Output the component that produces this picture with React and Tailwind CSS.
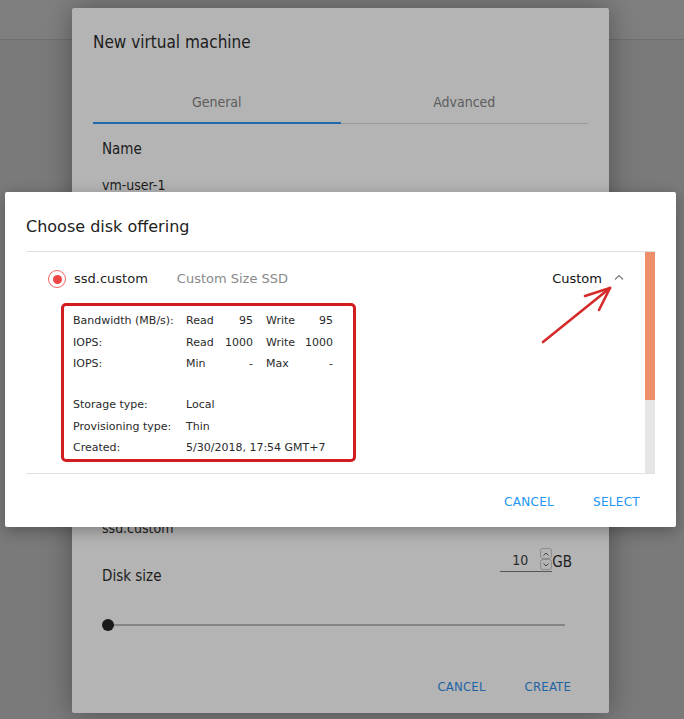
import React from 'react';

const dense = { fontFamily: '"DejaVu Sans Condensed", "DejaVu Sans", sans-serif' };
const sans = { fontFamily: '"DejaVu Sans", "Liberation Sans", sans-serif' };

const stats = [
  { label: 'Bandwidth (MB/s):', a: 'Read', av: '95', b: 'Write', bv: '95' },
  { label: 'IOPS:', a: 'Read', av: '1000', b: 'Write', bv: '1000' },
  { label: 'IOPS:', a: 'Min', av: '-', b: 'Max', bv: '-' },
];

const info = [
  { label: 'Storage type:', value: 'Local' },
  { label: 'Provisioning type:', value: 'Thin' },
  { label: 'Created:', value: '5/30/2018, 17:54 GMT+7' },
];

function BackDialog() {
  return (
    <div
      className="absolute left-[72px] top-[8px] w-[537px] h-[705px] bg-[#b4b4b4] rounded-[2px] shadow-[0_0_28px_rgba(0,0,0,0.35)] text-[#1c1c1c]"
      style={dense}
    >
      <div className="pl-[21px] pt-[23px] text-[17px] leading-[22px]">New virtual machine</div>

      {/* tabs */}
      <div className="mx-[21px] mt-[40px] flex text-[14px] text-[#5c5c5c]">
        <div className="flex-1 flex flex-col items-center">
          <span className="leading-[18px]">General</span>
          <div className="mt-[11px] h-[2px] w-full bg-[#2069ad]" />
        </div>
        <div className="flex-1 flex flex-col items-center">
          <span className="leading-[18px]">Advanced</span>
          <div className="mt-[12px] h-px w-full bg-[#999]" />
        </div>
      </div>

      <div className="px-[30px]">
        <div className="mt-[15px] text-[15px] leading-[20px]">Name</div>
        <div className="mt-[16px] text-[14px] leading-[20px]">vm-user-1</div>

        <div className="mt-[323px] text-[14px] leading-[20px]">ssd.custom</div>

        <div className="mt-[10px] flex items-start justify-between">
          <div className="mt-[18px] text-[15px] leading-[20px]">Disk size</div>
          <div className="flex items-start mr-[7px]">
            <div className="flex items-start border-b border-[#555] pb-[1px]">
              <div className="w-[40px] text-center text-[14px] leading-[18px] pt-[3px] pb-[1px] text-[#2a2a2a]">10</div>
              <div className="flex flex-col items-center">
                <div className="w-[12px] h-[11px] rounded-[3px] border border-[#8c8c8c] flex items-center justify-center">
                  <svg width="6" height="4" viewBox="0 0 6 4"><path d="M0.5 3.5 L3 1 L5.5 3.5" fill="none" stroke="#444" strokeWidth="1" /></svg>
                </div>
                <div className="w-[12px] h-[11px] rounded-[3px] border border-[#8c8c8c] flex items-center justify-center">
                  <svg width="6" height="4" viewBox="0 0 6 4"><path d="M0.5 0.5 L3 3 L5.5 0.5" fill="none" stroke="#444" strokeWidth="1" /></svg>
                </div>
              </div>
            </div>
            <div className="text-[15px] leading-[20px] mt-[4px]">GB</div>
          </div>
        </div>

        {/* slider */}
        <div className="mt-[33px] flex items-center h-[12px]">
          <div className="w-[12px] h-[12px] rounded-full bg-[#1a1a1a] -mr-[2px] z-10" />
          <div className="flex-1 h-[2px] bg-[#858585] mr-[14px]" />
        </div>

        <div className="mt-[46px] flex justify-end gap-[39px] pr-[8px] text-[13px] text-[#1e63a3] tracking-[0.2px]">
          <span>CANCEL</span>
          <span>CREATE</span>
        </div>
      </div>
    </div>
  );
}

function Arrow() {
  return (
    <svg className="absolute left-[535px] top-[280px]" width="85" height="70" viewBox="535 280 85 70">
      <g stroke="#d52b2b" strokeWidth="2.6" strokeLinecap="round" fill="none">
        <path d="M543 342 L610 288" />
        <path d="M610 288 L585 296" />
        <path d="M610 288 L599 310" />
      </g>
    </svg>
  );
}

function FrontDialog() {
  return (
    <div
      className="absolute left-[5px] top-[192px] w-[671px] h-[335px] bg-white rounded-[2px] shadow-[0_4px_16px_rgba(0,0,0,0.3)] text-[#222]"
      style={sans}
    >
      <div className="pl-[21px] pt-[25px] text-[16px] leading-[20px]">Choose disk offering</div>

      <div className="ml-[21px] mr-[21px] mt-[14px] flex h-[223px] border-y border-[#e0e0e0]">
        <div className="flex-1 relative">
          <div className="flex items-center h-[54px] pl-[22px] pr-[21px]">
            <div className="w-[18px] h-[18px] rounded-full border-[1.5px] border-[#f26464] flex items-center justify-center">
              <div className="w-[9px] h-[9px] rounded-full bg-[#f04545]" />
            </div>
            <span className="ml-[8px] text-[13px]">ssd.custom</span>
            <span className="ml-[29px] text-[13px] text-[#8a8a8a]">Custom Size SSD</span>
            <span className="ml-auto text-[13px] text-[#111]">Custom</span>
            <svg className="ml-[12px] mb-[4px]" width="10" height="6" viewBox="0 0 10 6">
              <path d="M1 5.5 L5 1.5 L9 5.5" fill="none" stroke="#777" strokeWidth="1.1" />
            </svg>
          </div>

          <div className="-mt-[3px] ml-[35px] w-[295px] h-[159px] border-[3px] border-[#d11d1d] rounded-[5px] pl-[9px] pt-[5px] text-[11px] text-[#2a2a2a]">
            {stats.map((r, i) => (
              <div key={i} className="flex h-[21.3px] items-center">
                <span className="w-[113px]">{r.label}</span>
                <span className="w-[36px]">{r.a}</span>
                <span className="w-[31px] text-right">{r.av}</span>
                <span className="ml-[13px] w-[38px]">{r.b}</span>
                <span className="w-[29px] text-right">{r.bv}</span>
              </div>
            ))}
            <div className="h-[20px]" />
            {info.map((r, i) => (
              <div key={i} className="flex h-[21.3px] items-center">
                <span className="w-[113px]">{r.label}</span>
                <span>{r.value}</span>
              </div>
            ))}
          </div>
        </div>
        <div className="w-[10px] flex flex-col">
          <div className="h-[148px] bg-[#ef8f69]" />
          <div className="flex-1 bg-[#e6e6e6]" />
        </div>
      </div>

      <div className="flex justify-end gap-[39px] pr-[36px] pt-[19px] text-[12px] text-[#2196f3] tracking-[0.3px]">
        <span>CANCEL</span>
        <span>SELECT</span>
      </div>
    </div>
  );
}

export default function App() {
  return (
    <div className="relative w-[684px] h-[719px] overflow-hidden bg-[#7a7a7a]">
      <div className="h-[40px] bg-[#7f7f7f] border-b border-[#6e6e6e]" />
      <BackDialog />
      <FrontDialog />
      <Arrow />
    </div>
  );
}
